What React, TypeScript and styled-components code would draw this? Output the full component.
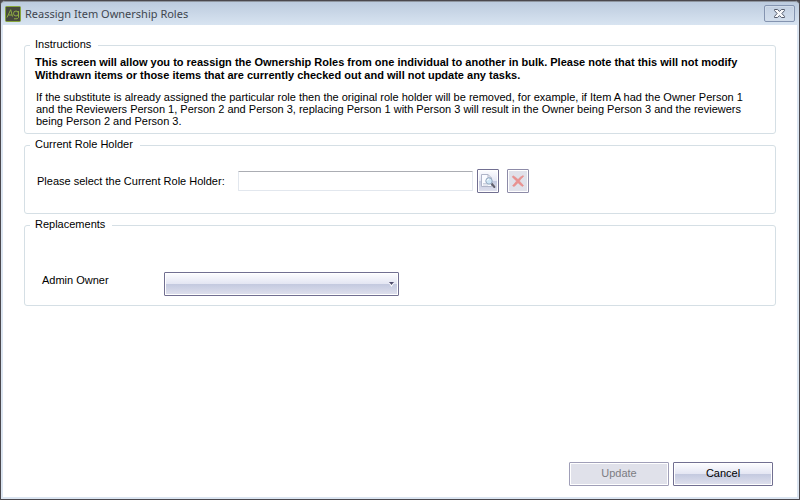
import React from "react";
import styled, { createGlobalStyle } from "styled-components";

const GlobalStyle = createGlobalStyle`
  *, *::before, *::after { box-sizing: border-box; }
  body { margin: 0; background: #4b484d; }
  body, button, input, select {
    font-family: "Liberation Sans", Arial, sans-serif;
    font-size: 11px;
    line-height: 13px;
    color: #000;
  }
  p { margin: 0; }
`;

const Window = styled.div`
  display: flex;
  flex-direction: column;
  min-height: 100vh;
  padding: 0 2px 2px;
  border: 1px solid #4b484d;
  border-radius: 5px 5px 0 0;
  background: #dbe5f1;
`;

const TitleBar = styled.header`
  display: flex;
  align-items: center;
  gap: 4px;
  height: 24px;
  margin: 0 -2px;
  padding: 0 4px;
  border-top: 1px solid #8e959f;
  border-radius: 4px 4px 0 0;
  background: linear-gradient(#bccbde, #d8e4f1);
`;

const Title = styled.h1`
  flex: 1;
  margin: 0;
  font-family: "Noto Sans", "Open Sans", sans-serif;
  font-size: 11px;
  line-height: 16px;
  font-weight: 400;
  color: #40464f;
`;

const CloseButton = styled.button`
  display: flex;
  align-items: center;
  justify-content: center;
  width: 31px;
  height: 17px;
  padding: 0;
  border: 1px solid #8494b0;
  border-radius: 2px;
  background: linear-gradient(#c3d0e2, #d3dfed);
  box-shadow: inset 0 0 0 1px #d0dbe9;
`;

const Content = styled.main`
  display: flex;
  flex: 1;
  flex-direction: column;
  gap: 4px;
  padding: 13px 21px 11px;
  background: #fff;
`;

const Group = styled.fieldset<{ $height: number }>`
  min-width: 0;
  min-height: ${(p) => p.$height}px;
  margin: 0;
  padding: 0 10px;
  border: 1px solid #d5dfe5;
  border-radius: 3px;
`;

const Legend = styled.legend`
  margin-left: -5px;
  padding: 0 7px 2px 5px;
`;

const Notice = styled.p`
  padding-top: 3px;
  font-weight: 700;
`;

const Detail = styled.p`
  padding: 9px 0 5px 1px;
  line-height: 12px;
`;

const Row = styled.div<{ $top: number; $indent: number }>`
  display: flex;
  align-items: center;
  padding-top: ${(p) => p.$top}px;
  padding-left: ${(p) => p.$indent}px;
`;

const Label = styled.label<{ $width: number; $raised?: boolean }>`
  flex: none;
  width: ${(p) => p.$width}px;
  padding-bottom: ${(p) => (p.$raised ? 8 : 0)}px;
`;

const TextInput = styled.input`
  width: 235px;
  height: 20px;
  margin-right: 4px;
  padding: 0 4px;
  border: 1px solid #e2e7ee;
  border-top-color: #abadb3;
  border-radius: 1px;
  background: #fff;
`;

const glossy = "linear-gradient(#fdfdff 0%, #e4e6f3 49%, #c3c9df 50%, #e0e1ee 100%)";

const IconButton = styled.button<{ $flat?: boolean }>`
  display: flex;
  align-items: center;
  justify-content: center;
  width: 22px;
  height: 24px;
  margin-right: 8px;
  padding: 0;
  border: 1px solid ${(p) => (p.$flat ? "#8d8ba8" : "#716f91")};
  border-radius: 1px;
  background: ${(p) => (p.$flat ? "#e0e1ea" : glossy)};
  box-shadow: inset 0 0 0 1px #fff;
`;

const Select = styled.select`
  appearance: none;
  width: 235px;
  height: 24px;
  padding: 0 16px 0 4px;
  border: 1px solid #716f91;
  border-radius: 1px;
  background: ${glossy};
  box-shadow: inset 0 0 0 1px #fff;
`;

const SelectWrap = styled.div`
  position: relative;
  display: flex;
`;

const Arrow = styled.svg`
  position: absolute;
  top: 10px;
  right: 4px;
  pointer-events: none;
`;

const Actions = styled.footer`
  display: flex;
  justify-content: flex-end;
  gap: 4px;
  margin-top: auto;
  padding-right: 3px;
`;

const ActionButton = styled.button`
  width: 100px;
  height: 24px;
  padding: 0 0 1px;
  border: 1px solid #716f91;
  border-radius: 1px;
  background: ${glossy};
  box-shadow: inset 0 0 0 1px #fff;

  &:disabled {
    border-color: #a09fb8;
    background: #e0e1ea;
    color: #7c7c82;
  }
`;

const AppIcon = () => (
  <svg width="16" height="16" viewBox="0 0 16 16" aria-hidden="true">
    <rect x="0.5" y="0.5" width="15" height="15" rx="1" fill="#47493e" stroke="#87a53a" />
    <g fill="none" stroke="#8fae43" strokeWidth="1">
      <path d="M2 11.5 L5.7 3.7 L7.5 10.5 M3.5 9 H7" />
      <circle cx="11" cy="7.5" r="2.5" />
      <path d="M13.5 5 V11.5 Q13.2 13.4 9 12.8" />
    </g>
  </svg>
);

const CloseIcon = () => (
  <svg width="13" height="11" viewBox="0 0 13 11" aria-hidden="true">
    <path
      d="M1.5 1.5 H4.6 L6.5 3.4 L8.4 1.5 H11.5 V2.6 L8.9 5.5 L11.5 8.4 V9.5 H8.4 L6.5 7.6 L4.6 9.5 H1.5 V8.4 L4.1 5.5 L1.5 2.6 Z"
      fill="#f8f9fb"
      stroke="#555c6c"
    />
  </svg>
);

const SearchPageIcon = () => (
  <svg width="16" height="16" viewBox="0 0 16 16" aria-hidden="true">
    <path d="M1.5 1.5 H8 L11.5 5 V13.5 H1.5 Z" fill="#fafbff" stroke="#b0b5c8" />
    <path d="M8 1.5 V5 H11.5" fill="none" stroke="#b0b5c8" />
    <path d="M3 10.5 H6 M3 12 H8" stroke="#ccd1df" />
    <path d="M11.5 10.5 L14.4 14" stroke="#62616c" strokeWidth="2" strokeLinecap="round" />
    <circle cx="9" cy="8" r="3.2" fill="#cfe6f6" stroke="#91a5bd" />
    <path d="M7 7.7 Q7.4 6.1 9 6" fill="none" stroke="#fff" />
  </svg>
);

const DeleteIcon = () => (
  <svg width="16" height="16" viewBox="0 0 16 16" aria-hidden="true">
    <path
      d="M3 2.8 Q5.5 4 8 6.5 Q10.5 3.5 13.2 2.6 L13.6 3.4 Q11 5.5 9.4 8 Q11.5 10.2 13.5 12.6 L12.4 13.4 Q10 11.8 8 9.7 Q6 12 4 13.6 L2.6 12.8 Q4.8 10.3 6.5 8.1 Q4.4 6 2.3 3.9 Z"
      fill="#e99190"
      stroke="#e5908d"
      strokeWidth="0.6"
    />
  </svg>
);

export default function App() {
  return (
    <>
      <GlobalStyle />
      <Window>
        <TitleBar>
          <AppIcon />
          <Title>Reassign Item Ownership Roles</Title>
          <CloseButton type="button" aria-label="Close">
            <CloseIcon />
          </CloseButton>
        </TitleBar>
        <Content>
          <Group $height={96}>
            <Legend>Instructions</Legend>
            <Notice>
              This screen will allow you to reassign the Ownership Roles from one individual to another in bulk. Please note that this will not modify
              <br />
              Withdrawn items or those items that are currently checked out and will not update any tasks.
            </Notice>
            <Detail>
              If the substitute is already assigned the particular role then the original role holder will be removed, for example, if Item A had the Owner Person 1
              <br />
              and the Reviewers Person 1, Person 2 and Person 3, replacing Person 1 with Person 3 will result in the Owner being Person 3 and the reviewers
              <br />
              being Person 2 and Person 3.
            </Detail>
          </Group>
          <Group $height={76}>
            <Legend>Current Role Holder</Legend>
            <Row $top={16} $indent={2}>
              <Label htmlFor="holder" $width={201}>
                Please select the Current Role Holder:
              </Label>
              <TextInput id="holder" type="text" />
              <IconButton type="button" aria-label="Find role holder">
                <SearchPageIcon />
              </IconButton>
              <IconButton type="button" aria-label="Clear role holder" disabled $flat>
                <DeleteIcon />
              </IconButton>
            </Row>
          </Group>
          <Group $height={88}>
            <Legend>Replacements</Legend>
            <Row $top={39} $indent={7}>
              <Label htmlFor="owner" $width={122} $raised>
                Admin Owner
              </Label>
              <SelectWrap>
                <Select id="owner" defaultValue="">
                  <option value="" />
                </Select>
                <Arrow width="7" height="6" viewBox="0 0 7 6" aria-hidden="true">
                  <path d="M1 1 H6 L3.5 5 Z" fill="#fff" />
                  <path d="M1 0 H6 L3.5 3 Z" fill="#4d4b6c" />
                </Arrow>
              </SelectWrap>
            </Row>
          </Group>
          <Actions>
            <ActionButton type="button" disabled>
              Update
            </ActionButton>
            <ActionButton type="button">Cancel</ActionButton>
          </Actions>
        </Content>
      </Window>
    </>
  );
}
